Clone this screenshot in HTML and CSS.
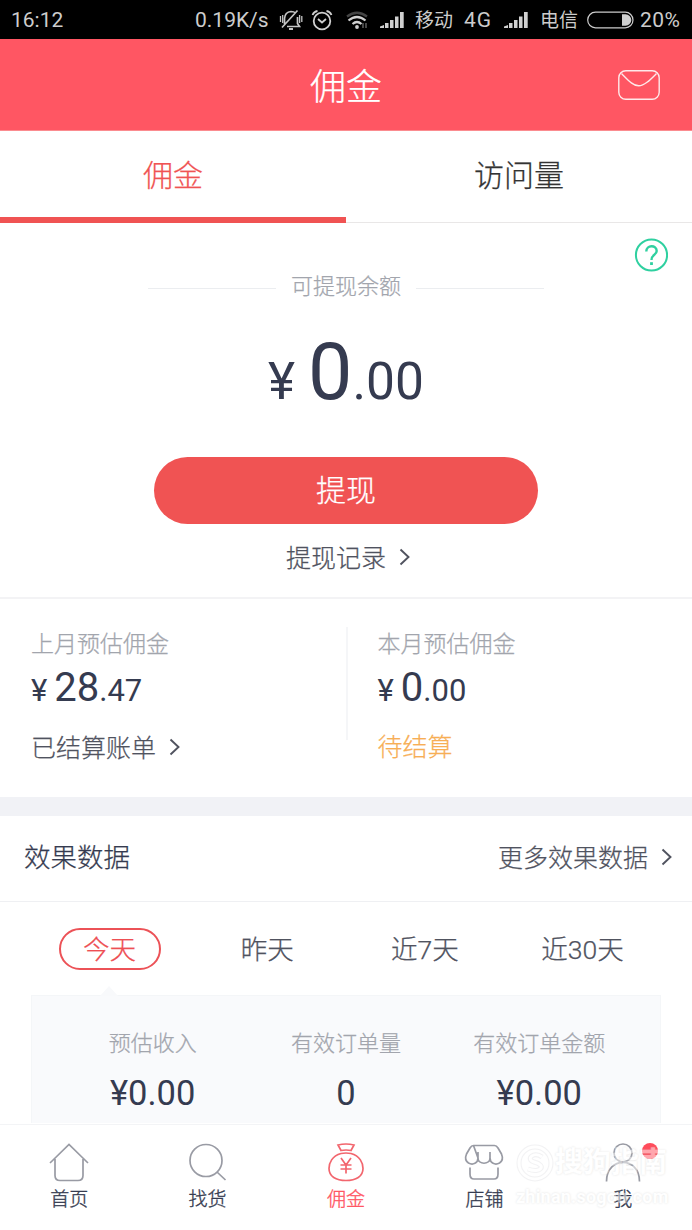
FILE: index.html
```html
<!DOCTYPE html>
<html lang="zh-CN">
<head>
<meta charset="utf-8">
<title>佣金</title>
<link rel="stylesheet" href="styles.css">
</head>
<body>
<div class="app">
  <div class="status">
    <span class="clock">16:12</span>
    <span class="speed">0.19K/s</span>
    <svg class="bell" width="24" height="22" viewBox="0 0 24 22" fill="none" stroke="#c4c4c4" stroke-width="1.7"><path d="M5.500 15V9.500Q6 3 12 2.500Q15 2.500 16.500 4M18.500 8V14.500L20.500 17.500H8M3 18.500L18.500 1.500"/><path d="M1.500 7v6M3.700 6v8M20.600 6v8M22.800 7v6" stroke-width="1.300"/><path d="M10 20h4" stroke-width="2"/></svg>
    <svg class="alarm" width="22" height="22" viewBox="0 0 22 22" fill="none" stroke="#d0d0d0" stroke-width="1.8"><circle cx="11" cy="12" r="8.300"/><path d="M7 10l4 3.500L15 10M1.500 6Q3 2.500 6.500 2M20.500 6Q19 2.500 15.500 2"/></svg>
    <svg class="wifi" width="24" height="22" viewBox="0 0 24 22" fill="none" stroke="#d0d0d0" stroke-width="2.200"><path d="M1 7.500Q11 0 21 7.500" stroke="#444"/><path d="M2.500 11.500Q11 4.500 19.500 11.500M6.500 15Q11 11 15.500 15"/><circle cx="11" cy="18" r="1.900" fill="#d0d0d0" stroke="none"/><path d="M17 14v5M20 14v5" stroke="#777" stroke-width="1.200"/></svg>
    <svg class="signal" width="24" height="16" viewBox="0 0 24 16" fill="#d0d0d0"><path d="M0 16v-1.500l4-1.500v3zM5 11h3.500v5H5zM10 8h3.500v8H10zM15 4.500h3.500v11.500H15zM20 0h3.700v16H20z"/></svg>
    <span class="carrier">移动</span>
    <span class="net">4G</span>
    <svg class="signal signal-b" width="24" height="16" viewBox="0 0 24 16" fill="#d0d0d0"><path d="M0 16v-1.500l4-1.500v3zM5 11h3.500v5H5zM10 8h3.500v8H10zM15 4.500h3.500v11.500H15zM20 0h3.700v16H20z"/></svg>
    <span class="carrier">电信</span>
    <svg class="battery" width="47" height="18" viewBox="0 0 47 18"><rect x=".7" y="1.200" width="45.300" height="15.600" rx="7.800" fill="none" stroke="#ccc" stroke-width="1.200"/><path d="M35 3.200h3.500a5.800 5.800 0 0 1 0 11.600H35z" fill="#d0d0d0"/></svg>
    <span class="percent">20%</span>
  </div>

  <header class="header">
    <h1 class="title">佣金</h1>
    <svg class="mail" width="42" height="30" viewBox="0 0 42 30" fill="none" stroke="#ffe9ea" stroke-width="1.400"><rect x=".8" y=".8" width="40.400" height="28.400" rx="7"/><path d="M3.500 3.500C10 10 15 15.800 20.700 15.800S32 10 38.500 3.500"/></svg>
  </header>

  <nav class="tabs">
    <div class="tab tab-on">佣金</div>
    <div class="tab">访问量</div>
  </nav>

  <section class="balance">
    <svg class="help" width="34" height="34" viewBox="0 0 34 34" fill="none" stroke="#2fd0a0" stroke-width="2"><circle cx="17.500" cy="17" r="15.600"/><path d="M12.300 13.500C12.300 6.500 22.700 6.500 22.700 13C22.700 17 17.500 16.500 17.500 22" stroke-width="2.400"/><path d="M17.500 24.200v2.800" stroke-width="2.800"/></svg>
    <div class="balance-label"><i class="rule"></i><span>可提现余额</span><i class="rule"></i></div>
    <div class="amount amount-big"><span class="yen">¥</span><span class="whole">0</span><span class="cents">.00</span></div>
    <div class="withdraw">提现</div>
    <div class="record link"><span>提现记录</span><svg class="chev" width="12" height="18" viewBox="0 0 12 18"><path d="M1.500 1.500L9.500 9l-8 7.500"/></svg></div>
  </section>

  <section class="months">
    <div class="month">
      <div class="month-label">上月预估佣金</div>
      <div class="amount"><span class="yen">¥</span><span class="whole">28</span><span class="cents">.47</span></div>
      <div class="bill link"><span>已结算账单</span><svg class="chev" width="12" height="18" viewBox="0 0 12 18"><path d="M1.500 1.500L9.500 9l-8 7.500"/></svg></div>
    </div>
    <i class="divider"></i>
    <div class="month">
      <div class="month-label">本月预估佣金</div>
      <div class="amount"><span class="yen">¥</span><span class="whole">0</span><span class="cents">.00</span></div>
      <div class="pending">待结算</div>
    </div>
  </section>

  <section class="effects">
    <div class="effects-head">
      <h2 class="effects-title">效果数据</h2>
      <div class="link"><span>更多效果数据</span><svg class="chev" width="12" height="18" viewBox="0 0 12 18"><path d="M1.500 1.500L9.500 9l-8 7.500"/></svg></div>
    </div>
    <div class="periods">
      <div class="period"><span class="pill">今天</span></div>
      <div class="period">昨天</div>
      <div class="period">近7天</div>
      <div class="period">近30天</div>
    </div>
    <svg class="pointer" width="18" height="10" viewBox="0 0 18 10"><path d="M0 10L9 0l9 10z" fill="#f8f9fb"/></svg>
    <div class="panel">
      <div class="stat"><div class="stat-label">预估收入</div><div class="stat-value">¥0.00</div></div>
      <div class="stat"><div class="stat-label">有效订单量</div><div class="stat-value">0</div></div>
      <div class="stat"><div class="stat-label">有效订单金额</div><div class="stat-value">¥0.00</div></div>
    </div>
  </section>

  <footer class="bottom">
    <div class="item"><svg width="44" height="42" viewBox="0 0 44 42"><path d="M3 21L22 2.500L41 21M8 17V33.500Q8 38.500 13 38.500H31Q36 38.500 36 33.500V17"/></svg><span>首页</span></div>
    <div class="item"><svg width="44" height="42" viewBox="0 0 44 42"><circle cx="20" cy="18.500" r="16"/><path d="M31 30l8.500 8"/></svg><span>找货</span></div>
    <div class="item item-on"><svg width="44" height="42" viewBox="0 0 44 42"><path d="M14 3Q22 1 30 3L27 8.500Q22 7.500 17 8.500ZM17 11.500C8 14 5 21 5 26.500C5 34.500 12 38.500 22 38.500S39 34.500 39 26.500C39 21 36 14 27 11.500Q22 10.500 17 11.500ZM17 16l5 7l5-7M22 23v8.500M16.500 23h11M16.500 27h11"/></svg><span>佣金</span></div>
    <div class="item"><svg width="44" height="42" viewBox="0 0 44 42"><path d="M11.500 3.500H32.500Q34.500 3.500 36 6L39.500 12Q42 18 37.500 21C33 23.500 28 21 28 16V10M28 16C28 23 16 23 16 16V10M16 16C16 21 11 23.500 6.500 21Q2 18 4.500 12L8 6Q9.500 3.500 11.500 3.500ZM8 25.500V32Q8 37 12 37H32Q36 37 36 32V25.500"/></svg><span>店铺</span></div>
    <div class="item"><svg width="44" height="42" viewBox="0 0 44 42"><circle cx="22" cy="11" r="9"/><path d="M5.500 39.500C5.500 14 38.500 14 38.500 39.500"/></svg><span>我</span><i class="dot"></i></div>
    <div class="watermark">
      <svg class="wm-logo" width="38" height="38" viewBox="0 0 38 38" fill="none"><circle cx="19" cy="19" r="16" stroke="#e6e6e9" stroke-width="5"/><circle cx="19" cy="19" r="16" stroke="#fff" stroke-width="3"/><path d="M26 13C18 7 9 15 18 18C31 21 25 30 12 25" stroke="#e6e6e9" stroke-width="5"/><path d="M26 13C18 7 9 15 18 18C31 21 25 30 12 25" stroke="#fff" stroke-width="3"/></svg>
      <span class="wm-name">搜狗指南</span>
      <span class="wm-url">zhinan.sogou.com</span>
    </div>
  </footer>
</div>
</body>
</html>
```
FILE: styles.css
```css
* { box-sizing: border-box; margin: 0; padding: 0; }
body {
  width: 692px;
  height: 1230px;
  overflow: hidden;
  background: #fff;
  color: #353b50;
  font-family: Roboto, "Noto Sans CJK SC", sans-serif;
  font-weight: 300;
  white-space: nowrap;
  -webkit-text-stroke-width: 0.25px;
}
svg { display: block; flex: none; }
i { display: block; font-style: normal; }
.app { display: flex; flex-direction: column; height: 1230px; }

.status {
  display: flex;
  align-items: center;
  flex: none;
  height: 39px;
  padding-left: 11px;
  background: #000;
  color: #ccc;
  font-size: 21px;
  font-weight: 400;
  line-height: 37px;
  -webkit-text-stroke-width: 0;
}
.status span { padding-top: 2px; }
.clock { width: 184px; }
.speed { width: 84px; }
.bell { margin-right: 8px; }
.alarm { margin-right: 13px; }
.wifi { margin-right: 10px; }
.signal { margin-right: 11px; }
.carrier { width: 49px; font-size: 19px; }
.net { width: 40px; letter-spacing: 1px; }
.signal-b { margin-right: 12px; }
.battery { margin: 0 6px 0 -2px; }
.percent { letter-spacing: 0.5px; }

.header {
  position: relative;
  display: flex;
  align-items: center;
  justify-content: center;
  flex: none;
  height: 92px;
  padding-top: 6px;
  border-bottom: 1px solid #fb8c90;
  background: #ff5663;
}
.title { color: #fff; font-size: 36px; font-weight: 300; line-height: 52px; }
.mail { position: absolute; right: 32px; top: 31px; }

.tabs { display: flex; flex: none; height: 92px; }
.tab {
  flex: 1;
  border-bottom: 1px solid #e9e7e7;
  color: #333;
  font-size: 30px;
  line-height: 90px;
  text-align: center;
}
.tab-on { border-bottom: 6px solid #f05353; color: #f05353; }

.balance {
  position: relative;
  display: flex;
  flex-direction: column;
  align-items: center;
  flex: none;
  height: 376px;
  padding-top: 48px;
  border-bottom: 2px solid #f3f3f5;
}
.help { position: absolute; right: 24px; top: 15px; }
.balance-label {
  display: flex;
  align-items: center;
  gap: 15px;
  color: #a2a5ad;
  font-size: 22px;
  line-height: 32px;
}
.rule { width: 128px; height: 1px; margin-top: 2px; background: #ebedf0; }
.amount { display: flex; align-items: baseline; font-weight: 400; -webkit-text-stroke-width: 0; }
.yen { font-size: 31px; }
.whole { margin-left: 7px; font-size: 40px; }
.cents { font-size: 31px; }
.amount-big { height: 94px; margin-top: 22px; line-height: 94px; }
.amount-big .yen, .amount-big .cents { font-size: 51.500px; }
.amount-big .whole { margin-left: 13px; font-size: 79px; }
.withdraw {
  width: 384px;
  height: 67px;
  margin-top: 38px;
  border-radius: 34px;
  background: #f05353;
  color: #fff;
  font-size: 30px;
  line-height: 68px;
  text-align: center;
}
.link { display: flex; align-items: center; color: #50535f; font-size: 25px; line-height: 36px; }
.link span { position: relative; top: 2px; }
.chev { margin-left: 13px; fill: none; stroke: #50535f; stroke-width: 1.900px; }
.record { margin: 15px 0 0 5px; }

.months { display: flex; flex: none; height: 198px; padding-left: 31px; }
.month { width: 315px; padding-top: 29px; }
.month-label { color: #a2a5ad; font-size: 23px; line-height: 33px; }
.month .amount { height: 50px; margin-top: 2px; line-height: 50px; }
.bill { margin-top: 16px; }
.divider { width: 2px; height: 113px; margin: 28px 30px 0 0; background: #f5f6f8; }
.pending { margin-top: 17px; color: #f7ae55; font-size: 25px; line-height: 36px; }

.effects { flex: 1; border-top: 19px solid #f1f2f6; }
.effects-head {
  display: flex;
  align-items: center;
  justify-content: space-between;
  height: 86px;
  padding: 0 19px 3px 24px;
  border-bottom: 1px solid #eff0f3;
}
.effects-title { padding-top: 2px; font-size: 26.500px; font-weight: 300; line-height: 38px; }
.periods {
  display: flex;
  justify-content: space-between;
  height: 84px;
  padding: 26px 31px 0;
  color: #50535f;
  font-size: 26.500px;
  line-height: 44px;
}
.period { width: 157px; text-align: center; }
.pill {
  display: block;
  width: 102px;
  height: 42px;
  margin: 0 auto;
  border: 2px solid #ec5257;
  border-radius: 21px;
  color: #ee4f54;
  line-height: 40px;
}
.pointer { margin: 0 0 -1px 100px; }
.panel {
  display: flex;
  height: 128px;
  margin: 0 31px;
  padding: 31px 24px 0;
  border: 1px solid #f4f6f8;
  border-bottom: 0;
  background: #f9fafc;
}
.stat { flex: 1; text-align: center; }
.stat-label { color: #a2a5ad; font-size: 22px; line-height: 34px; }
.stat-value { margin-top: 10px; font-size: 34.500px; font-weight: 400; line-height: 44px; -webkit-text-stroke-width: 0; }

.bottom {
  position: relative;
  display: flex;
  flex: none;
  height: 106px;
  border-top: 1px solid #f3f4f6;
  background: #fff;
}
.item {
  position: relative;
  display: flex;
  flex: 1;
  flex-direction: column;
  align-items: center;
  padding-top: 17px;
  font-size: 19px;
  line-height: 28px;
  -webkit-text-stroke-width: 0.35px;
}
.item svg { margin-bottom: 2px; fill: none; stroke: #999ba4; stroke-width: 1.700px; }
.item-on { color: #ff5663; }
.item-on svg { stroke: #f2666e; }
.dot { position: absolute; left: 88px; top: 18px; width: 16px; height: 16px; border-radius: 50%; background: #ff4c5b; }
.watermark { position: absolute; left: 514px; top: 19px; width: 160px; height: 62px; opacity: 0.5; }
.wm-logo { position: absolute; left: 2px; top: 0; }
.wm-name, .wm-url { position: absolute; color: #fff; font-weight: 700; text-shadow: 0 0 2px #bbb; }
.wm-name { left: 41px; top: 0; font-size: 28px; line-height: 38px; }
.wm-url { left: 2px; top: 42px; font-size: 18px; line-height: 22px; letter-spacing: 0.2px; }
```
